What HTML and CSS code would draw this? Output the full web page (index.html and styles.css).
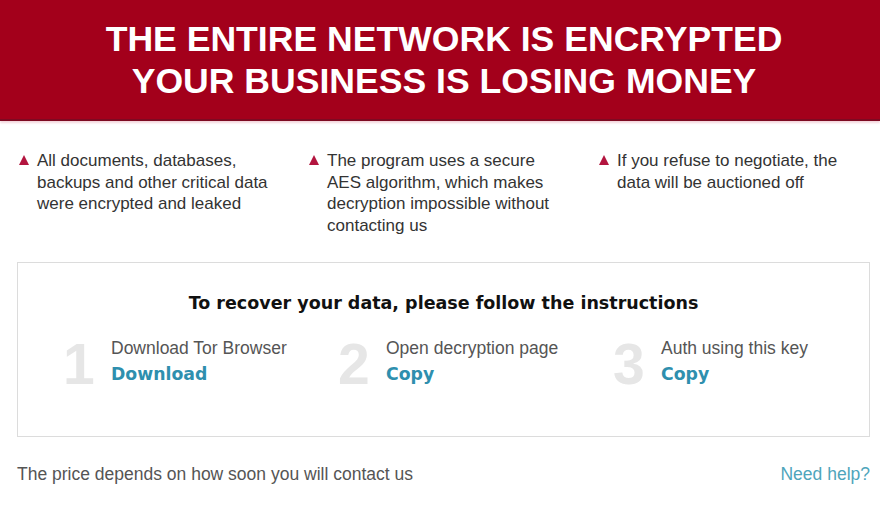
FILE: index.html
```html
<!DOCTYPE html>
<html lang="en">
<head>
  <meta charset="utf-8">
  <title>Network encrypted</title>
  <link rel="stylesheet" href="styles.css">
</head>
<body>

<div class="banner">
  <h1>THE ENTIRE NETWORK IS ENCRYPTED<br>YOUR BUSINESS IS LOSING MONEY</h1>
</div>

<div class="content">
  <ul class="facts">
    <li>All documents, databases, backups and other critical data were encrypted and leaked</li>
    <li>The program uses a secure AES algorithm, which makes decryption impossible without contacting us</li>
    <li>If you refuse to negotiate, the data will be auctioned off</li>
  </ul>

  <div class="steps-box">
    <h2>To recover your data, please follow the instructions</h2>
    <div class="steps">
      <div class="step">
        <span class="num">1</span>
        <div>
          <p>Download Tor Browser</p>
          <a href="#">Download</a>
        </div>
      </div>
      <div class="step">
        <span class="num">2</span>
        <div>
          <p>Open decryption page</p>
          <a href="#">Copy</a>
        </div>
      </div>
      <div class="step">
        <span class="num">3</span>
        <div>
          <p>Auth using this key</p>
          <a href="#">Copy</a>
        </div>
      </div>
    </div>
  </div>

  <div class="footer">
    <span>The price depends on how soon you will contact us</span>
    <a href="#">Need help?</a>
  </div>
</div>

</body>
</html>
```

FILE: styles.css
```css
body {margin: 0; background: #fff; color: #333; font-family: "Liberation Sans", Arial, sans-serif;}
.banner {background: #a3001b; height: 119px; padding-left: 8px; border-bottom: 2px solid #7d0a22; box-shadow: 0 2px 2px #f4d6dc; display: flex; align-items: center; justify-content: center;}
.banner h1 {margin: 0; color: #fff; font-size: 35.6px; line-height: 42px; text-align: center; font-weight: bold;}
.content {padding: 0 10px 0 17px;}
.facts {list-style: none; margin: 29px 0 0; padding: 0; display: grid; grid-template-columns: 290px 290px 1fr;}
.facts li {padding-left: 20px; max-width: 262px; box-sizing: border-box; position: relative; font-size: 17px; line-height: 21.5px; color: #333;}
.facts li::before {content: ""; position: absolute; left: 2px; top: 5px; border-left: 5px solid transparent; border-right: 5px solid transparent; border-bottom: 10px solid #b3153f;}
.steps-box {margin-top: 26px; border: 1px solid #dcdcdc; height: 173px;}
.steps-box h2 {margin: 28px 0 0; text-align: center; font-family: "DejaVu Sans", Verdana, sans-serif; font-size: 17.5px; line-height: 24px; color: #111; font-weight: bold;}
.steps {display: grid; grid-template-columns: 275px 275px 1fr; padding-left: 45px; margin-top: 21px;}
.step {display: flex; gap: 21px;}
.num {font-size: 57px; line-height: 54px; font-weight: bold; color: #e6e6e6; width: 27px; margin-top: 1px;}
.step p {margin: 0; font-size: 17.5px; line-height: 24px; color: #555;}
.step a {display: block; font-family: "DejaVu Sans", Verdana, sans-serif; font-size: 17.3px; line-height: 28px; font-weight: bold; color: #2e8fae; text-decoration: none;}
.footer {display: flex; justify-content: space-between; margin-top: 27px; font-size: 17.5px; line-height: 20px; color: #555;}
.footer a {color: #4fa5bb; text-decoration: none;}
```
